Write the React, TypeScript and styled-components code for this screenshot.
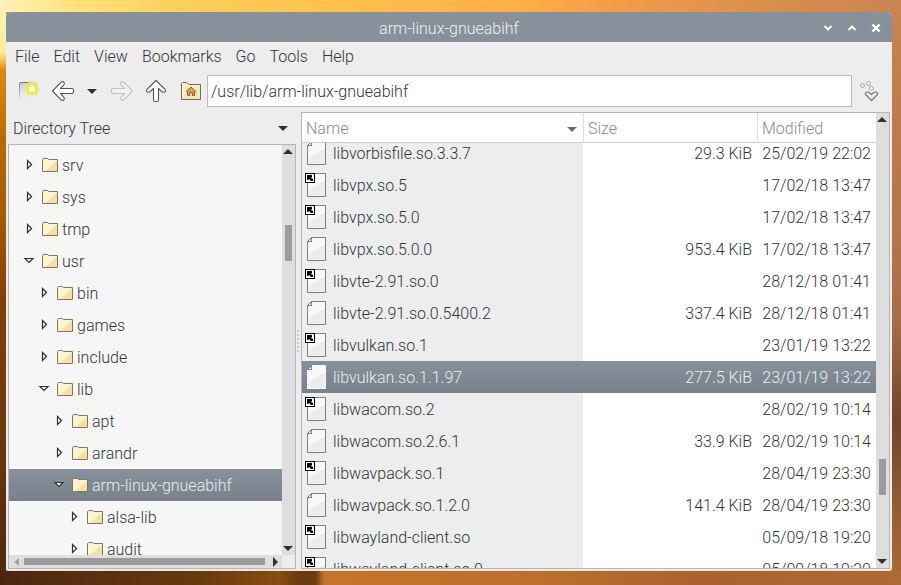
import React, { useEffect, useRef, useState } from "react";
import styled, { createGlobalStyle, css } from "styled-components";

const GlobalStyle = createGlobalStyle`
  * { box-sizing: border-box; }
  body {
    margin: 0;
    font-family: Roboto, "Liberation Sans", sans-serif;
    font-weight: 300;
    font-size: 16px;
    line-height: 20px;
    color: #30363b;
  }
  button, input {
    font: inherit;
    color: inherit;
    border: 0;
    padding: 0;
    background: none;
  }
  svg { display: block; }
`;

const selectedFill = css`
  background: linear-gradient(#87919b, #78828c);
  color: #e9ecef;
`;

const Desktop = styled.main`
  height: 100vh;
  display: flex;
  padding: 12px 9px 14px 6px;
  background:
    linear-gradient(90deg, #fff3b8 0, #ffe27c 8%, #ffcf59 20%, #ffc04b 38%, #ffae46 58%, #f39d46 68%, #dc914b 82%, #c98550 100%) top / 100% 12px no-repeat,
    linear-gradient(90deg, #4b260f 0, #573010 10%, #68390e 22%, #8a4c12 31%, #6b3a10 33%, #6b3a10 35%, #c4742a 36%, #bd702c 60%, #a9622d 78%, #ae6a35 100%) bottom / 100% 14px no-repeat,
    linear-gradient(#fff3b8 0, #ffeb92 9%, #e08a0c 12%, #b86a00 24%, #a15a03 38%, #854007 50%, #6d390b 75%, #4b260f 100%) left / 6px 100% no-repeat,
    linear-gradient(#c98550 0, #bd7c4c 20%, #b2744a 42%, #a76d48 55%, #704529 72%, #8d5a34 84%, #ae6a35 100%);
`;

const Window = styled.section`
  flex: 1;
  min-width: 0;
  display: flex;
  flex-direction: column;
  overflow: hidden;
  background: #ededed;
  border-radius: 5px 5px 3px 3px;
  border-bottom: 1px solid #efe3d8;
`;

const TitleBar = styled.header`
  flex: none;
  height: 30px;
  display: grid;
  grid-template-columns: 1fr auto 1fr;
  align-items: center;
  padding-top: 2px;
  background: #87919b;
  color: #eef0f2;
`;

const Title = styled.h1`
  grid-column: 2;
  margin: 0;
  padding-top: 2px;
  font-size: 16px;
  font-weight: 300;
`;

const WindowButtons = styled.div`
  display: flex;
  justify-content: flex-end;
  gap: 8px;
  padding-right: 8px;
`;

const WindowButton = styled.button`
  width: 16px;
  height: 16px;
  display: grid;
  place-items: center;
`;

const MenuBar = styled.nav`
  flex: none;
  display: flex;
  gap: 14px;
  height: 33px;
  padding: 5px 9px 8px;
`;

const ToolBar = styled.div`
  flex: none;
  display: flex;
  align-items: center;
  gap: 5px;
  height: 32px;
  padding: 0 11px;
`;

const ToolGroup = styled.div`
  display: flex;
  gap: 10px;
`;

const ToolButton = styled.button<{ $narrow?: boolean }>`
  width: ${(p) => (p.$narrow ? 15 : 24)}px;
  height: 24px;
  display: grid;
  place-items: center;
  ${(p) => p.$narrow && "padding-right: 1px;"}
`;

const PathInput = styled.input`
  flex: 1;
  min-width: 0;
  height: 32px;
  padding: 0 3px;
  background: #fff;
  border: 1px solid #b9bbbd;
  outline: none;
`;

const Panes = styled.div`
  flex: 1;
  min-height: 0;
  display: flex;
  padding: 5px 2px 1px;
`;

const SidePane = styled.aside`
  flex: none;
  width: 288px;
  display: flex;
  flex-direction: column;
`;

const SideHeader = styled.button`
  height: 32px;
  display: flex;
  align-items: center;
  justify-content: space-between;
  padding: 0 8px 0 5px;
`;

const Label = styled.span`
  padding-top: 2px;
`;

const TreeFrame = styled.div`
  flex: 1;
  min-height: 0;
  display: grid;
  grid-template: minmax(0, 1fr) 13px / minmax(0, 1fr) 13px;
  border: 1px solid #b2b6ba;
`;

const Tree = styled.div`
  overflow: hidden;
  padding-top: 4px;
  background: #f6f6f6;
`;

const TreeRow = styled.div<{ $level: number; $selected?: boolean }>`
  height: 32px;
  display: flex;
  align-items: center;
  padding-left: ${(p) => 12 + p.$level * 15}px;
  white-space: nowrap;
  ${(p) => p.$selected && selectedFill}
`;

const Expander = styled.button`
  width: 16px;
  height: 16px;
  margin-right: 5px;
`;

const TreeLabel = styled(Label)`
  margin-left: 4px;
`;

const Splitter = styled.div`
  flex: none;
  width: 5px;
  display: flex;
  flex-direction: column;
  align-items: flex-start;
  justify-content: center;
  gap: 2px;
  padding-left: 1px;
`;

const GripDot = styled.i`
  width: 2px;
  height: 2px;
  border-radius: 1px;
  background: #bcbcbc;
`;

const FileFrame = styled.div`
  flex: 1;
  min-width: 0;
  display: flex;
  border: 1px solid #b2b6ba;
  background: #fff;
`;

const FileScroller = styled.div`
  flex: 1;
  min-width: 0;
  overflow: hidden;
`;

const FileTable = styled.table`
  width: 100%;
  table-layout: fixed;
  border-collapse: separate;
  border-spacing: 0;
`;

const HeadCell = styled.th<{ $width?: number }>`
  position: sticky;
  top: 0;
  z-index: 1;
  width: ${(p) => (p.$width ? `${p.$width}px` : "auto")};
  height: 30px;
  padding: 2px 6px 0 4px;
  text-align: left;
  font-weight: 300;
  color: #8b8b8b;
  background: #fff;
  border-bottom: 1px solid #cfcfcf;
  & + & { border-left: 1px solid #dedede; }
`;

const HeadContent = styled.div`
  display: flex;
  align-items: center;
  justify-content: space-between;
`;

const Cell = styled.td`
  height: 32px;
  padding: 2px 5px 0;
  text-align: right;
  white-space: nowrap;
`;

const NameCell = styled(Cell)`
  padding: 0 2px;
  background: #ededed;
`;

const NameContent = styled.div`
  display: flex;
  align-items: center;
  gap: 5px;
`;

const FileRow = styled.tr<{ $selected?: boolean }>`
  ${(p) =>
    p.$selected &&
    css`
      ${Cell} { ${selectedFill} }
    `}
`;

const ScrollTrack = styled.div<{ $horizontal?: boolean }>`
  flex: none;
  display: flex;
  flex-direction: ${(p) => (p.$horizontal ? "row" : "column")};
  align-items: center;
  width: ${(p) => (p.$horizontal ? "auto" : "13px")};
  background: #dedede;
`;

const ScrollArrow = styled.button<{ $horizontal?: boolean }>`
  flex: none;
  width: ${(p) => (p.$horizontal ? 15 : 13)}px;
  height: ${(p) => (p.$horizontal ? 13 : 14)}px;
  display: grid;
  place-items: center;
  ${(p) => !p.$horizontal && "padding-right: 1px;"}
`;

const ScrollSpace = styled.div<{ $grow: number }>`
  flex: ${(p) => p.$grow} 1 0;
`;

const ScrollThumb = styled.div<{ $horizontal?: boolean }>`
  flex: ${(p) => (p.$horizontal ? "241 1 0" : "none")};
  width: 7px;
  height: ${(p) => (p.$horizontal ? 7 : 36)}px;
  background: #9c9c9c;
`;

type Dir = "up" | "down" | "left" | "right";
const trianglePoints: Record<Dir, string> = {
  up: "0,7 5,2 10,7",
  down: "0,3 10,3 5,8",
  left: "7,1 2,5 7,9",
  right: "3,0 8,5 3,10",
};

const Triangle = ({ dir, color = "#303030" }: { dir: Dir; color?: string }) => (
  <svg width="10" height="10" viewBox="0 0 10 10">
    <polygon points={trianglePoints[dir]} fill={color} />
  </svg>
);

const ScrollBar = ({ before, after }: { before: number; after: number }) => (
  <ScrollTrack>
    <ScrollArrow aria-label="Scroll up"><Triangle dir="up" /></ScrollArrow>
    <ScrollSpace $grow={before} />
    <ScrollThumb />
    <ScrollSpace $grow={after} />
    <ScrollArrow aria-label="Scroll down"><Triangle dir="down" /></ScrollArrow>
  </ScrollTrack>
);

const HorizontalScrollBar = () => (
  <ScrollTrack $horizontal>
    <ScrollArrow $horizontal aria-label="Scroll left"><Triangle dir="left" color="#a4a4a4" /></ScrollArrow>
    <ScrollThumb $horizontal />
    <ScrollSpace $grow={2} />
    <ScrollArrow $horizontal aria-label="Scroll right"><Triangle dir="right" /></ScrollArrow>
  </ScrollTrack>
);

const NewTabIcon = () => (
  <svg width="24" height="24" viewBox="0 0 24 24">
    <defs>
      <linearGradient id="tabStroke" x1="0" y1="0" x2="0" y2="1">
        <stop offset="0" stopColor="#777" />
        <stop offset="1" stopColor="#777" stopOpacity="0" />
      </linearGradient>
      <linearGradient id="tabFill" x1="0" y1="0" x2="0" y2="1">
        <stop offset="0" stopColor="#c9c9c9" />
        <stop offset="1" stopColor="#ededed" stopOpacity="0" />
      </linearGradient>
      <radialGradient id="starGlow">
        <stop offset="0.5" stopColor="#f0ee20" />
        <stop offset="0.75" stopColor="#e9e94a" stopOpacity="0.8" />
        <stop offset="1" stopColor="#f0f080" stopOpacity="0" />
      </radialGradient>
    </defs>
    <path d="M2.5 22V5Q2.5 3.5 4 3.5H19Q20.5 3.5 20.5 5V17L2.5 22Z" fill="url(#tabFill)" />
    <path d="M2.5 22V5Q2.5 3.5 4 3.5H13" fill="none" stroke="url(#tabStroke)" />
    <circle cx="15" cy="9.5" r="8" fill="url(#starGlow)" />
    <path d="M15 4L16.7 7.3L20.4 7.9L17.7 10.500L18.300 14.300L15 12.500L11.700 14.300L12.300 10.500L9.600 7.900L13.300 7.300Z" fill="#fffff4" stroke="#dcd90c" strokeWidth="0.5" />
  </svg>
);

const ArrowIcon = ({ rotate = 0, muted }: { rotate?: number; muted?: boolean }) => (
  <svg width="24" height="24" viewBox="0 0 24 24">
    <path
      transform={`rotate(${rotate} 12 12)`}
      d="M1.5 12L10.3 2.9Q12.6 1.7 13.3 4.2Q13.4 5.4 12.6 6.2L9.5 9.5H21Q22.5 9.5 22.5 11V13Q22.5 14.5 21 14.5H9.5L12.6 17.8Q13.4 18.6 13.3 19.8Q12.6 22.3 10.3 21.1Z"
      fill={muted ? "#f1f1f1" : "#fff"}
      stroke={muted ? "#c1c1c1" : "#555"}
      strokeWidth="1.1"
      strokeLinejoin="round"
    />
  </svg>
);

const HomeIcon = () => (
  <svg width="24" height="24" viewBox="0 0 24 24">
    <path d="M3.5 20.5V4.5L4.5 3.5H8.5L10.5 5.5H22.5V20.5Z" fill="#f7e9bd" stroke="#75694f" />
    <path d="M4.5 19V5L8 4.5L10 6.5H21.5" fill="none" stroke="#fffbe6" />
    <path d="M9.5 16.5V12.5H8.3L13 8L17.7 12.5H16.5V16.5H14.3V13.5H11.7V16.5Z" fill="#e99a62" stroke="#a9562d" />
  </svg>
);

const GoIcon = () => (
  <svg width="24" height="24" viewBox="0 0 24 24" fill="#fafafa" stroke="#a0a0a0">
    <circle cx="5.5" cy="6.5" r="2" />
    <circle cx="11.5" cy="4.5" r="2" />
    <circle cx="14.3" cy="9.3" r="2" />
    <path d="M8.5 15.5Q8 13.5 10 13Q11.5 12.5 14.5 15.5Q17.5 12.5 19 13Q21 13.5 20.5 15.5L14.5 21.5Z" fill="#e9e9e9" stroke="#777" strokeWidth="1.2" strokeLinejoin="round" />
  </svg>
);

const FolderIcon = () => (
  <svg width="16" height="16" viewBox="0 0 16 16">
    <path d="M0.5 14.5V2.5L1.5 1.5H5.5L6.5 2.5H15.5V14.5Z" fill="#fbf3d3" stroke="#81765b" />
    <path d="M15 4V14H3Z" fill="#f4e1a5" />
  </svg>
);

const ExpanderIcon = ({ open, selected }: { open?: boolean; selected?: boolean }) => (
  <svg width="16" height="16" viewBox="0 0 16 16" stroke="#303030" strokeWidth="1.2">
    {open ? (
      <path d="M4 5.5H12L8 9.5Z" fill={selected ? "#fff" : "#f8f8f8"} />
    ) : (
      <path d="M6.5 3.5L10.5 7.5L6.5 11.5Z" fill="#fff" />
    )}
  </svg>
);

const PageIcon = ({ link, selected }: { link?: boolean; selected?: boolean }) => (
  <svg width="24" height="28" viewBox="0 0 24 28">
    <path
      d={link ? "M3.5 2.5H21.5V25.5H3.5Z" : "M7.5 2.5H21.5V25.5H3.5V6.5Z"}
      fill="#f8f8f8"
      stroke={selected ? "#f8f8f8" : "#808080"}
    />
    <path d="M21 9L4 20V25H21Z" fill="#ececec" />
    {!link && <path d="M7.5 2.5V6.5H3.5Z" fill="#fff" stroke="#777" />}
    {link && (
      <>
        <rect x="1.5" y="2.5" width="9" height="9" fill="#fff" stroke="#000" />
        <path d="M3 4H8V6L7 7L9 8V10H7L5 8L4 9H3Z" fill="#000" />
      </>
    )}
  </svg>
);

interface TreeItem { name: string; level: number; open?: boolean }
const treeItems: TreeItem[] = [
  { name: "srv", level: 0 },
  { name: "sys", level: 0 },
  { name: "tmp", level: 0 },
  { name: "usr", level: 0, open: true },
  { name: "bin", level: 1 },
  { name: "games", level: 1 },
  { name: "include", level: 1 },
  { name: "lib", level: 1, open: true },
  { name: "apt", level: 2 },
  { name: "arandr", level: 2 },
  { name: "arm-linux-gnueabihf", level: 2, open: true },
  { name: "alsa-lib", level: 3 },
  { name: "audit", level: 3 },
];

interface FileItem { name: string; size?: string; modified: string }
const files: FileItem[] = [
  { name: "libvorbisfile.so.3.3.7", size: "29.3 KiB", modified: "25/02/19 22:02" },
  { name: "libvpx.so.5", modified: "17/02/18 13:47" },
  { name: "libvpx.so.5.0", modified: "17/02/18 13:47" },
  { name: "libvpx.so.5.0.0", size: "953.4 KiB", modified: "17/02/18 13:47" },
  { name: "libvte-2.91.so.0", modified: "28/12/18 01:41" },
  { name: "libvte-2.91.so.0.5400.2", size: "337.4 KiB", modified: "28/12/18 01:41" },
  { name: "libvulkan.so.1", modified: "23/01/19 13:22" },
  { name: "libvulkan.so.1.1.97", size: "277.5 KiB", modified: "23/01/19 13:22" },
  { name: "libwacom.so.2", modified: "28/02/19 10:14" },
  { name: "libwacom.so.2.6.1", size: "33.9 KiB", modified: "28/02/19 10:14" },
  { name: "libwavpack.so.1", modified: "28/04/19 23:30" },
  { name: "libwavpack.so.1.2.0", size: "141.4 KiB", modified: "28/04/19 23:30" },
  { name: "libwayland-client.so", modified: "05/09/18 19:20" },
  { name: "libwayland-client.so.0", modified: "05/09/18 19:20" },
];

const currentFolder = "arm-linux-gnueabihf";
const selectedFile = "libvulkan.so.1.1.97";
const menus = ["File", "Edit", "View", "Bookmarks", "Go", "Tools", "Help"];

export default function App() {
  const [path, setPath] = useState("/usr/lib/arm-linux-gnueabihf");
  const scroller = useRef<HTMLDivElement>(null);

  useEffect(() => {
    if (scroller.current) scroller.current.scrollTop = 6;
  }, []);

  return (
    <Desktop>
      <GlobalStyle />
      <Window>
        <TitleBar>
          <Title>{currentFolder}</Title>
          <WindowButtons>
            <WindowButton aria-label="Minimise">
              <svg width="10" height="10" viewBox="0 0 10 10"><path d="M1.5 3L5 6.5L8.5 3" fill="none" stroke="#fff" strokeWidth="2" /></svg>
            </WindowButton>
            <WindowButton aria-label="Maximise">
              <svg width="10" height="10" viewBox="0 0 10 10"><path d="M1.5 7L5 3.5L8.5 7" fill="none" stroke="#fff" strokeWidth="2" /></svg>
            </WindowButton>
            <WindowButton aria-label="Close">
              <svg width="10" height="10" viewBox="0 0 10 10"><path d="M1.5 1.5L8.5 8.5M8.5 1.5L1.5 8.5" stroke="#fff" strokeWidth="2.4" /></svg>
            </WindowButton>
          </WindowButtons>
        </TitleBar>
        <MenuBar>
          {menus.map((m) => <button key={m}>{m}</button>)}
        </MenuBar>
        <ToolBar>
          <ToolGroup>
            <ToolButton aria-label="New tab"><NewTabIcon /></ToolButton>
            <ToolButton aria-label="Back"><ArrowIcon /></ToolButton>
            <ToolButton $narrow aria-label="History"><Triangle dir="down" /></ToolButton>
            <ToolButton aria-label="Forward" disabled><ArrowIcon rotate={180} muted /></ToolButton>
            <ToolButton aria-label="Parent folder"><ArrowIcon rotate={90} /></ToolButton>
            <ToolButton aria-label="Home"><HomeIcon /></ToolButton>
          </ToolGroup>
          <PathInput aria-label="Location" value={path} onChange={(e) => setPath(e.target.value)} />
          <ToolButton aria-label="Go to location"><GoIcon /></ToolButton>
        </ToolBar>
        <Panes>
          <SidePane>
            <SideHeader>
              <Label>Directory Tree</Label>
              <Triangle dir="down" />
            </SideHeader>
            <TreeFrame>
              <Tree role="tree" aria-label="Directory Tree">
                {treeItems.map((t) => {
                  const selected = t.name === currentFolder;
                  return (
                    <TreeRow key={t.name} role="treeitem" aria-level={t.level + 1} aria-expanded={!!t.open} aria-selected={selected} $level={t.level} $selected={selected}>
                      <Expander aria-label={`Toggle ${t.name}`}>
                        <ExpanderIcon open={t.open} selected={selected} />
                      </Expander>
                      <FolderIcon />
                      <TreeLabel>{t.name}</TreeLabel>
                    </TreeRow>
                  );
                })}
              </Tree>
              <ScrollBar before={66} after={280} />
              <HorizontalScrollBar />
            </TreeFrame>
          </SidePane>
          <Splitter role="separator" aria-orientation="vertical">
            {[0, 1, 2, 3, 4, 5].map((i) => <GripDot key={i} />)}
          </Splitter>
          <FileFrame>
            <FileScroller ref={scroller}>
              <FileTable>
                <thead>
                  <tr>
                    <HeadCell aria-sort="ascending">
                      <HeadContent>Name <Triangle dir="down" color="#6c6c6c" /></HeadContent>
                    </HeadCell>
                    <HeadCell $width={174}>Size</HeadCell>
                    <HeadCell $width={119}>Modified</HeadCell>
                  </tr>
                </thead>
                <tbody>
                  {files.map((f) => {
                    const selected = f.name === selectedFile;
                    return (
                      <FileRow key={f.name} aria-selected={selected} $selected={selected}>
                        <NameCell>
                          <NameContent>
                            <PageIcon link={!f.size} selected={selected} />
                            <Label>{f.name}</Label>
                          </NameContent>
                        </NameCell>
                        <Cell>{f.size}</Cell>
                        <Cell>{f.modified}</Cell>
                      </FileRow>
                    );
                  })}
                </tbody>
              </FileTable>
            </FileScroller>
            <ScrollBar before={332} after={59} />
          </FileFrame>
        </Panes>
      </Window>
    </Desktop>
  );
}
